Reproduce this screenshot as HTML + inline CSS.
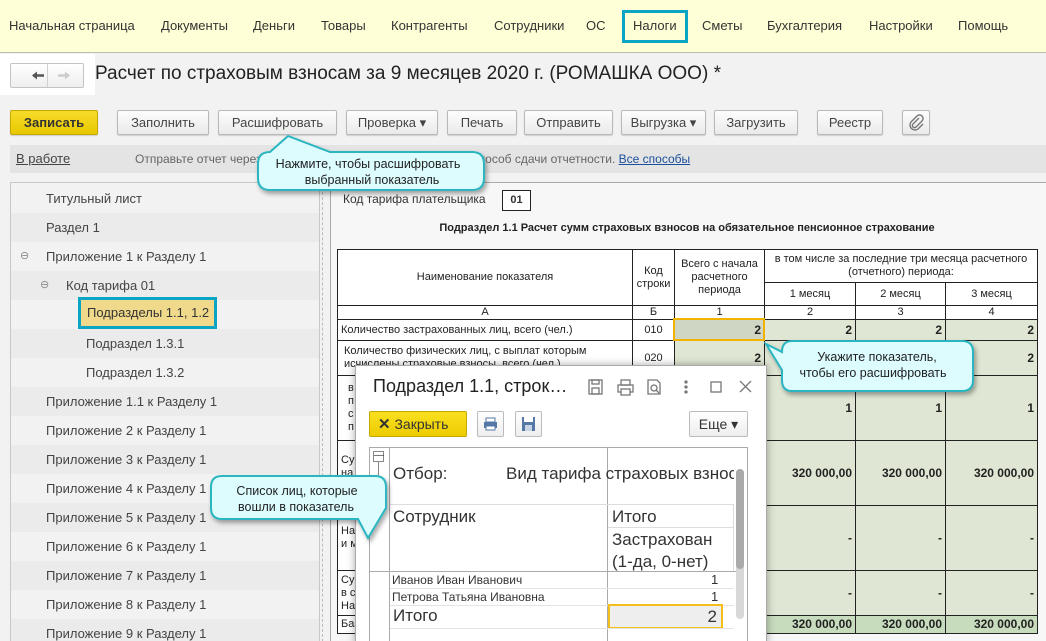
<!DOCTYPE html>
<html><head><meta charset="utf-8"><style>
*{box-sizing:border-box;margin:0;padding:0}
html,body{width:1046px;height:641px;overflow:hidden}
body{position:relative;background:#f2f2f2;font-family:"Liberation Sans",Arial,sans-serif;color:#333}
.a{position:absolute;white-space:nowrap}
.menu{left:0;top:0;width:1046px;height:53px;background:#ffffd7;border-bottom:1px solid #bdbdb0}
.mi{position:absolute;top:18px;font-size:13px;color:#333;white-space:nowrap}
.btn{position:absolute;top:110px;height:25px;background:linear-gradient(#fdfdfd,#eaeaea);border:1px solid #b9b9b9;border-radius:2px;font-size:13px;color:#444;text-align:center;line-height:23px;box-shadow:0 1px 1px rgba(0,0,0,.15);white-space:nowrap}
.tree{left:10px;top:182px;width:310px;height:459px;border:1px solid #c8c8c8;border-bottom:none;background:#f2f2f2;overflow:hidden}
.tr{position:absolute;left:0;width:308px;height:29px;font-size:13px;color:#444;line-height:29px}
table.t{position:absolute;border-collapse:collapse;table-layout:fixed;white-space:normal;font-family:"Liberation Sans",Arial,sans-serif}
td{border:1px solid #222;font-size:11px;color:#222;padding:0 3px;overflow:hidden;line-height:13px;vertical-align:middle;white-space:normal}
.g{background:#dfe6d3;text-align:right;font-weight:bold;font-size:12px}
.gt{background:#c7dbbd;text-align:right;font-weight:bold;font-size:12px}
.c{text-align:center}
</style></head><body>
<div class="a menu"></div>
<div class="mi" style="left:9px">Начальная страница</div>
<div class="mi" style="left:161px">Документы</div>
<div class="mi" style="left:253px">Деньги</div>
<div class="mi" style="left:321px">Товары</div>
<div class="mi" style="left:391px">Контрагенты</div>
<div class="mi" style="left:494px">Сотрудники</div>
<div class="mi" style="left:586px">ОС</div>
<div class="mi" style="left:633px">Налоги</div>
<div class="a" style="left:622px;top:10px;width:66px;height:33px;border:3px solid #0aa5c4"></div>
<div class="mi" style="left:702px">Сметы</div>
<div class="mi" style="left:767px">Бухгалтерия</div>
<div class="mi" style="left:869px">Настройки</div>
<div class="mi" style="left:958px">Помощь</div>

<div class="a" style="left:0;top:54px;width:95px;height:41px;background:#fff"></div>
<div class="a" style="left:10px;top:63px;width:74px;height:25px;border:1px solid #c4c4c4;border-radius:2px;background:linear-gradient(#fff,#eee)"></div>
<div class="a" style="left:47px;top:64px;width:1px;height:23px;background:#d0d0d0"></div>
<svg class="a" style="left:10px;top:63px" width="74" height="25"><path d="M23 12.5h11" stroke="#555" stroke-width="2.5"/><path d="M22 12.5l5-4v8z" fill="#555"/><path d="M59 12.5h-11" stroke="#ccc" stroke-width="2.5"/><path d="M60 12.5l-5-4v8z" fill="#ccc"/></svg>
<div class="a" style="left:95px;top:63px;font-size:19px;color:#222">Расчет по страховым взносам за 9 месяцев 2020 г. (РОМАШКА ООО) *</div>

<div class="btn" style="left:10px;width:88px;background:linear-gradient(#f7dc2a,#e8c800);border-color:#c7a800;font-weight:bold;color:#333">Записать</div>
<div class="btn" style="left:117px;width:92px">Заполнить</div>
<div class="btn" style="left:218px;width:119px">Расшифровать</div>
<div class="btn" style="left:346px;width:92px">Проверка ▾</div>
<div class="btn" style="left:447px;width:70px">Печать</div>
<div class="btn" style="left:524px;width:89px">Отправить</div>
<div class="btn" style="left:621px;width:85px">Выгрузка ▾</div>
<div class="btn" style="left:714px;width:84px">Загрузить</div>
<div class="btn" style="left:817px;width:66px">Реестр</div>
<div class="btn" style="left:902px;width:28px"><svg width="26" height="23"><path d="M16 7l-6 6a2 2 0 0 0 3 3l6-6a3.5 3.5 0 0 0-5-5l-6 6a5 5 0 0 0 7 7l5-5" fill="none" stroke="#777" stroke-width="1.4"/></svg></div>

<div class="a" style="left:10px;top:145px;width:1036px;height:28px;background:#e4e4e4"></div>
<div class="a" style="left:16px;top:151px;font-size:13px;text-decoration:underline;color:#444">В работе</div>
<div class="a" style="left:135px;top:152px;font-size:12px;color:#666">Отправьте отчет через 1С-Отчетность или выберите другой способ сдачи отчетности. <span style="color:#1a4f9c;text-decoration:underline">Все способы</span></div>

<div class="a tree">
<div class="tr" style="top:1px;background:#f2f2f2;padding-left:35px">Титульный лист</div>
<div class="tr" style="top:30px;background:#ebebeb;padding-left:35px">Раздел 1</div>
<div class="tr" style="top:59px;background:#f2f2f2;padding-left:35px"><span style="position:absolute;left:9px;color:#888;font-size:11px">⊖</span>Приложение 1 к Разделу 1</div>
<div class="tr" style="top:88px;background:#ebebeb;padding-left:55px"><span style="position:absolute;left:29px;color:#888;font-size:11px">⊖</span>Код тарифа 01</div>
<div class="tr" style="top:117px;background:#f2f2f2"></div>
<div class="tr" style="top:146px;background:#ebebeb;padding-left:75px">Подраздел 1.3.1</div>
<div class="tr" style="top:175px;background:#f2f2f2;padding-left:75px">Подраздел 1.3.2</div>
<div class="tr" style="top:204px;background:#ebebeb;padding-left:35px">Приложение 1.1 к Разделу 1</div>
<div class="tr" style="top:233px;background:#f2f2f2;padding-left:35px">Приложение 2 к Разделу 1</div>
<div class="tr" style="top:262px;background:#ebebeb;padding-left:35px">Приложение 3 к Разделу 1</div>
<div class="tr" style="top:291px;background:#f2f2f2;padding-left:35px">Приложение 4 к Разделу 1</div>
<div class="tr" style="top:320px;background:#ebebeb;padding-left:35px">Приложение 5 к Разделу 1</div>
<div class="tr" style="top:349px;background:#f2f2f2;padding-left:35px">Приложение 6 к Разделу 1</div>
<div class="tr" style="top:378px;background:#ebebeb;padding-left:35px">Приложение 7 к Разделу 1</div>
<div class="tr" style="top:407px;background:#f2f2f2;padding-left:35px">Приложение 8 к Разделу 1</div>
<div class="tr" style="top:436px;background:#ebebeb;padding-left:35px">Приложение 9 к Разделу 1</div>
</div>
<div class="a" style="left:78px;top:297px;width:139px;height:32px;border:3px solid #0aa5c4;background:#f0d98a;font-size:13px;color:#333;line-height:26px;padding-left:6px">Подразделы 1.1, 1.2</div>

<div class="a" style="left:322px;top:182px;width:1px;height:460px;border-left:1px dashed #bbb"></div>
<div class="a" style="left:330px;top:182px;width:716px;height:460px;background:#f7f7f7;border-left:1px solid #aaa;border-top:1px solid #aaa"></div>
<div class="a" style="left:343px;top:192px;font-size:12px;color:#333">Код тарифа плательщика</div>
<div class="a" style="left:502px;top:190px;width:29px;height:21px;border:1px solid #222;font-size:11px;font-weight:bold;text-align:center;line-height:19px;background:#fff">01</div>
<div class="a" style="left:337px;top:222px;width:700px;text-align:center;font-size:11px;font-weight:bold;color:#222">Подраздел 1.1 Расчет сумм страховых взносов на обязательное пенсионное страхование</div>

<table class="t" style="left:337px;top:249px;width:700px;background:#fff">
<colgroup><col style="width:295px"><col style="width:42px"><col style="width:90px"><col style="width:91px"><col style="width:90px"><col style="width:92px"></colgroup>
<tr style="height:33px"><td rowspan="2" class="c">Наименование показателя</td><td rowspan="2" class="c" style="padding:0">Код строки</td><td rowspan="2" class="c">Всего с начала расчетного периода</td><td colspan="3" class="c">в том числе за последние три месяца расчетного (отчетного) периода:</td></tr>
<tr style="height:23px"><td class="c">1 месяц</td><td class="c">2 месяц</td><td class="c">3 месяц</td></tr>
<tr style="height:14px"><td class="c">А</td><td class="c">Б</td><td class="c">1</td><td class="c">2</td><td class="c">3</td><td class="c">4</td></tr>
<tr style="height:21px"><td>Количество застрахованных лиц, всего (чел.)</td><td class="c">010</td><td class="g" style="background:#cfd6c4">2</td><td class="g">2</td><td class="g">2</td><td class="g">2</td></tr>
<tr style="height:35px"><td style="padding-left:6px">Количество физических лиц, с выплат которым исчислены страховые взносы, всего (чел.)</td><td class="c">020</td><td class="g">2</td><td class="g">2</td><td class="g">2</td><td class="g">2</td></tr>
<tr style="height:65px"><td style="padding-left:10px">в т.ч.<br>п<br>с<br>п</td><td class="c"></td><td class="g">1</td><td class="g">1</td><td class="g">1</td><td class="g">1</td></tr>
<tr style="height:65px"><td>Су<br>на<br>в</td><td></td><td class="g">320 000,00</td><td class="g">320 000,00</td><td class="g">320 000,00</td><td class="g">320 000,00</td></tr>
<tr style="height:65px"><td>На<br>и м</td><td></td><td class="g">-</td><td class="g">-</td><td class="g">-</td><td class="g">-</td></tr>
<tr style="height:45px"><td>Су<br>в с<br>На</td><td></td><td class="g">-</td><td class="g">-</td><td class="g">-</td><td class="g">-</td></tr>
<tr style="height:18px"><td>База</td><td></td><td class="gt">320 000,00</td><td class="gt">320 000,00</td><td class="gt">320 000,00</td><td class="gt">320 000,00</td></tr>
</table>
<div class="a" style="left:673px;top:318px;width:92px;height:23px;border:2px solid #f0b400"></div>

<!-- dialog -->
<div class="a" style="left:355px;top:365px;width:412px;height:280px;background:#fff;border:1px solid #aaa;box-shadow:0 0 8px rgba(0,0,0,.35)"></div>
<div class="a" style="left:373px;top:376px;font-size:18px;color:#222">Подраздел 1.1, строк…</div>
<svg class="a" style="left:585px;top:377px" width="170" height="20" viewBox="0 0 170 20" fill="none" stroke="#777" stroke-width="1.3">
<rect x="4" y="3" width="13" height="14"/><rect x="7" y="3" width="7" height="4"/><rect x="7" y="11" width="7" height="6"/>
<rect x="33" y="8" width="15" height="7"/><rect x="36" y="3" width="9" height="5"/><rect x="36" y="12" width="9" height="6" fill="#fff"/>
<path d="M63 3h9l3 3v11h-12z"/><circle cx="69" cy="11" r="3"/><path d="M71 13l3 3"/>
<circle cx="101" cy="5" r="1" fill="#777"/><circle cx="101" cy="10" r="1" fill="#777"/><circle cx="101" cy="15" r="1" fill="#777"/>
<rect x="126" y="5" width="10" height="10"/><path d="M155 4l11 11M166 4l-11 11"/></svg>
<div class="a" style="left:369px;top:411px;width:98px;height:26px;background:linear-gradient(#f9e020,#edcc00);border:1px solid #c4a600;border-radius:2px;font-size:14px;line-height:24px;padding-left:8px;color:#333"><b style="font-size:15px">✕</b> Закрыть</div>
<div class="a" style="left:477px;top:411px;width:27px;height:26px;border:1px solid #bbb;border-radius:2px;background:linear-gradient(#fff,#eee)"><svg width="25" height="24"><rect x="6" y="10" width="13" height="6" fill="#5577a5"/><rect x="8" y="6" width="9" height="4" fill="#fff" stroke="#5577a5"/><rect x="8" y="14" width="9" height="4" fill="#fff" stroke="#5577a5"/></svg></div>
<div class="a" style="left:515px;top:411px;width:27px;height:26px;border:1px solid #bbb;border-radius:2px;background:linear-gradient(#fff,#eee)"><svg width="25" height="24"><rect x="6" y="5" width="13" height="14" fill="#5577a5"/><rect x="8" y="5" width="9" height="5" fill="#fff"/><rect x="9" y="13" width="7" height="6" fill="#c8d4e6"/></svg></div>
<div class="a" style="left:689px;top:411px;width:59px;height:26px;border:1px solid #bbb;border-radius:2px;background:linear-gradient(#fff,#eee);font-size:14px;line-height:24px;text-align:center;color:#333">Еще ▾</div>
<div class="a" style="left:369px;top:447px;width:379px;height:200px;border:1px solid #aaa;background:#fff"></div>
<div class="a" style="left:389px;top:447px;width:1px;height:194px;background:#aaa"></div>
<div class="a" style="left:607px;top:447px;width:1px;height:194px;background:#aaa"></div>
<div class="a" style="left:373px;top:451px;width:11px;height:11px;border:1px solid #888;font-size:10px;line-height:7px;text-align:center">—</div>
<div class="a" style="left:378px;top:462px;width:1px;height:18px;background:#888"></div>
<div class="a" style="left:393px;top:464px;font-size:17px;color:#333">Отбор:</div>
<div class="a" style="left:506px;top:464px;width:228px;overflow:hidden;font-size:17px;color:#333">Вид тарифа страховых взносов</div>
<div class="a" style="left:390px;top:504px;width:344px;height:1px;background:#ddd"></div>
<div class="a" style="left:393px;top:507px;font-size:17px;color:#333">Сотрудник</div>
<div class="a" style="left:612px;top:507px;font-size:17px;color:#333">Итого</div>
<div class="a" style="left:608px;top:527px;width:126px;height:1px;background:#ddd"></div>
<div class="a" style="left:612px;top:529px;font-size:17px;line-height:22px;color:#333">Застрахован<br>(1-да, 0-нет)</div>
<div class="a" style="left:733px;top:504px;width:1px;height:68px;background:#ddd"></div>
<div class="a" style="left:369px;top:571px;width:370px;height:1px;background:#aaa"></div>
<div class="a" style="left:392px;top:573px;font-size:12px;color:#333">Иванов Иван Иванович</div>
<div class="a" style="left:711px;top:572px;font-size:13px;color:#333">1</div>
<div class="a" style="left:390px;top:588px;width:344px;height:1px;background:#e4e4e4"></div>
<div class="a" style="left:392px;top:590px;font-size:12px;color:#333">Петрова Татьяна Ивановна</div>
<div class="a" style="left:711px;top:589px;font-size:13px;color:#333">1</div>
<div class="a" style="left:390px;top:605px;width:344px;height:1px;background:#e4e4e4"></div>
<div class="a" style="left:393px;top:606px;font-size:17px;color:#333">Итого</div>
<div class="a" style="left:608px;top:604px;width:115px;height:25px;border:2px solid #f5bf1a;background:#eee;font-size:17px;text-align:right;padding-right:4px;line-height:21px;color:#333">2</div>
<div class="a" style="left:390px;top:628px;width:344px;height:1px;background:#e4e4e4"></div>
<div class="a" style="left:736px;top:469px;width:8px;height:150px;background:#d8d8d8;border-radius:4px"></div>
<div class="a" style="left:736px;top:469px;width:8px;height:100px;background:#aaa;border-radius:4px"></div>

<!-- callouts -->
<svg class="a" style="left:0;top:0;pointer-events:none" width="1046" height="641">
<defs><filter id="s" x="-20%" y="-20%" width="140%" height="160%"><feDropShadow dx="2" dy="3" stdDeviation="2.5" flood-color="#000" flood-opacity=".35"/></filter></defs>
<g fill="#dcfcfe" stroke="#2ab5c0" stroke-width="2" filter="url(#s)">
<path d="M270 152 L288 136 L330 152 H472 Q484 152 484 164 V178 Q484 190 472 190 H270 Q258 190 258 178 V164 Q258 152 270 152Z"/>
<path d="M792 341 H962 Q973 341 973 352 V380 Q973 391 962 391 H792 Q782 391 782 380 V370 L766 344 L782 352 Q782 341 792 341Z"/>
<path d="M222 476 H375 Q386 476 386 487 V508 L368 538 L358 519 H222 Q211 519 211 508 V487 Q211 476 222 476Z"/>
</g>
<g font-family="Liberation Sans,Arial,sans-serif" font-size="12.5" fill="#222" text-anchor="middle">
<text x="368" y="168">Нажмите, чтобы расшифровать</text><text x="372" y="184">выбранный показатель</text>
<text x="877" y="361">Укажите показатель,</text><text x="873" y="377">чтобы его расшифровать</text>
<text x="297" y="495">Список лиц, которые</text><text x="296" y="511">вошли в показатель</text>
</g></svg>
</body></html>
